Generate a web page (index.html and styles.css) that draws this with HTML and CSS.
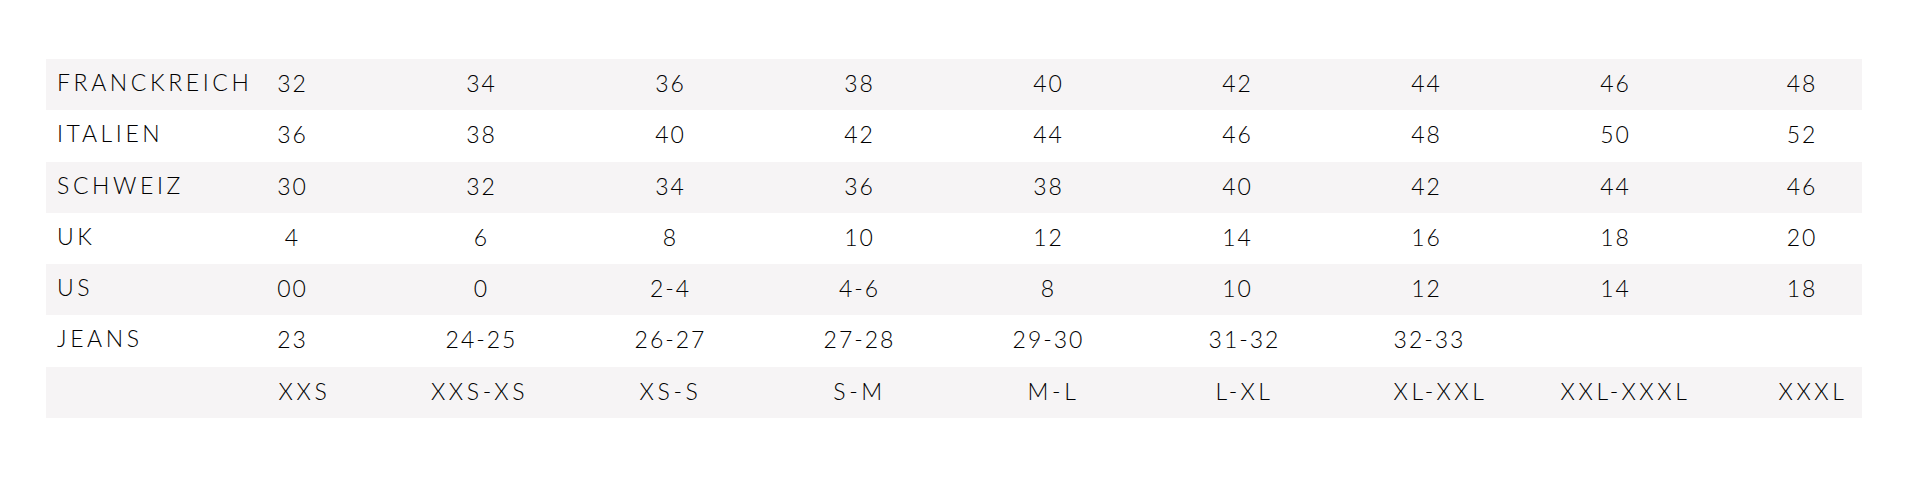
FILE: index.html
```html
<!DOCTYPE html>
<html lang="de">
<head>
<meta charset="utf-8">
<title>Größentabelle</title>
<link rel="stylesheet" href="styles.css">
</head>
<body>
<div class="page">
  <div class="size-table">
    <div class="row shaded">
      <div class="label">FRANCKREICH</div>
      <div class="cell">32</div><div class="cell">34</div><div class="cell">36</div><div class="cell">38</div><div class="cell">40</div><div class="cell">42</div><div class="cell">44</div><div class="cell">46</div><div class="cell last">48</div>
    </div>
    <div class="row">
      <div class="label">ITALIEN</div>
      <div class="cell">36</div><div class="cell">38</div><div class="cell">40</div><div class="cell">42</div><div class="cell">44</div><div class="cell">46</div><div class="cell">48</div><div class="cell">50</div><div class="cell last">52</div>
    </div>
    <div class="row shaded">
      <div class="label">SCHWEIZ</div>
      <div class="cell">30</div><div class="cell">32</div><div class="cell">34</div><div class="cell">36</div><div class="cell">38</div><div class="cell">40</div><div class="cell">42</div><div class="cell">44</div><div class="cell last">46</div>
    </div>
    <div class="row">
      <div class="label">UK</div>
      <div class="cell">4</div><div class="cell">6</div><div class="cell">8</div><div class="cell">10</div><div class="cell">12</div><div class="cell">14</div><div class="cell">16</div><div class="cell">18</div><div class="cell last">20</div>
    </div>
    <div class="row shaded">
      <div class="label">US</div>
      <div class="cell">00</div><div class="cell">0</div><div class="cell">2-4</div><div class="cell">4-6</div><div class="cell">8</div><div class="cell">10</div><div class="cell">12</div><div class="cell">14</div><div class="cell last">18</div>
    </div>
    <div class="row jeans">
      <div class="label">JEANS</div>
      <div class="cell">23</div><div class="cell">24-25</div><div class="cell">26-27</div><div class="cell">27-28</div><div class="cell">29-30</div><div class="cell">31-32</div><div class="cell">32-33</div><div class="cell"></div><div class="cell last"></div>
    </div>
    <div class="row shaded sizes">
      <div class="label"></div>
      <div class="cell">XXS</div><div class="cell">XXS-XS</div><div class="cell">XS-S</div><div class="cell">S-M</div><div class="cell">M-L</div><div class="cell">L-XL</div><div class="cell">XL-XXL</div><div class="cell">XXL-XXXL</div><div class="cell last">XXXL</div>
    </div>
  </div>
</div>
</body>
</html>
```

FILE: styles.css
```css
html, body {
  margin: 0;
  padding: 0;
  background: #ffffff;
}

.page {
  padding: 59px 58px 0 46px;
  font-family: "Lato", "Liberation Sans", sans-serif;
  font-weight: 300;
  font-size: 23px;
  letter-spacing: 2px;
  color: #000000;
}

.size-table {
  display: flex;
  flex-direction: column;
}

.row {
  display: grid;
  grid-template-columns: 152px repeat(8, 189px) 1fr;
  height: 51.3px;
  align-items: start;
}

.row.shaded {
  background: #f6f4f5;
}

.label {
  padding: 10px 0 0 11px;
  line-height: 26px;
  letter-spacing: 3.6px;
}

.cell {
  text-align: center;
  padding-top: 11px;
  line-height: 26px;
}

.cell.last {
  padding-left: 32px;
}

.sizes .cell {
  letter-spacing: 3.6px;
}

.sizes .cell:nth-child(2) { padding-left: 24px; }
.sizes .cell:nth-child(3) { padding-right: 4px; }
.sizes .cell:nth-child(6) { padding-left: 10px; }
.sizes .cell:nth-child(7) { padding-left: 14px; }
.sizes .cell:nth-child(8) { padding-left: 28px; }
.sizes .cell:nth-child(9) { padding-left: 20px; }
.sizes .cell.last { padding-left: 54px; }

.jeans .cell:nth-child(7) { padding-left: 14px; }
.jeans .cell:nth-child(8) { padding-left: 6px; }
```
